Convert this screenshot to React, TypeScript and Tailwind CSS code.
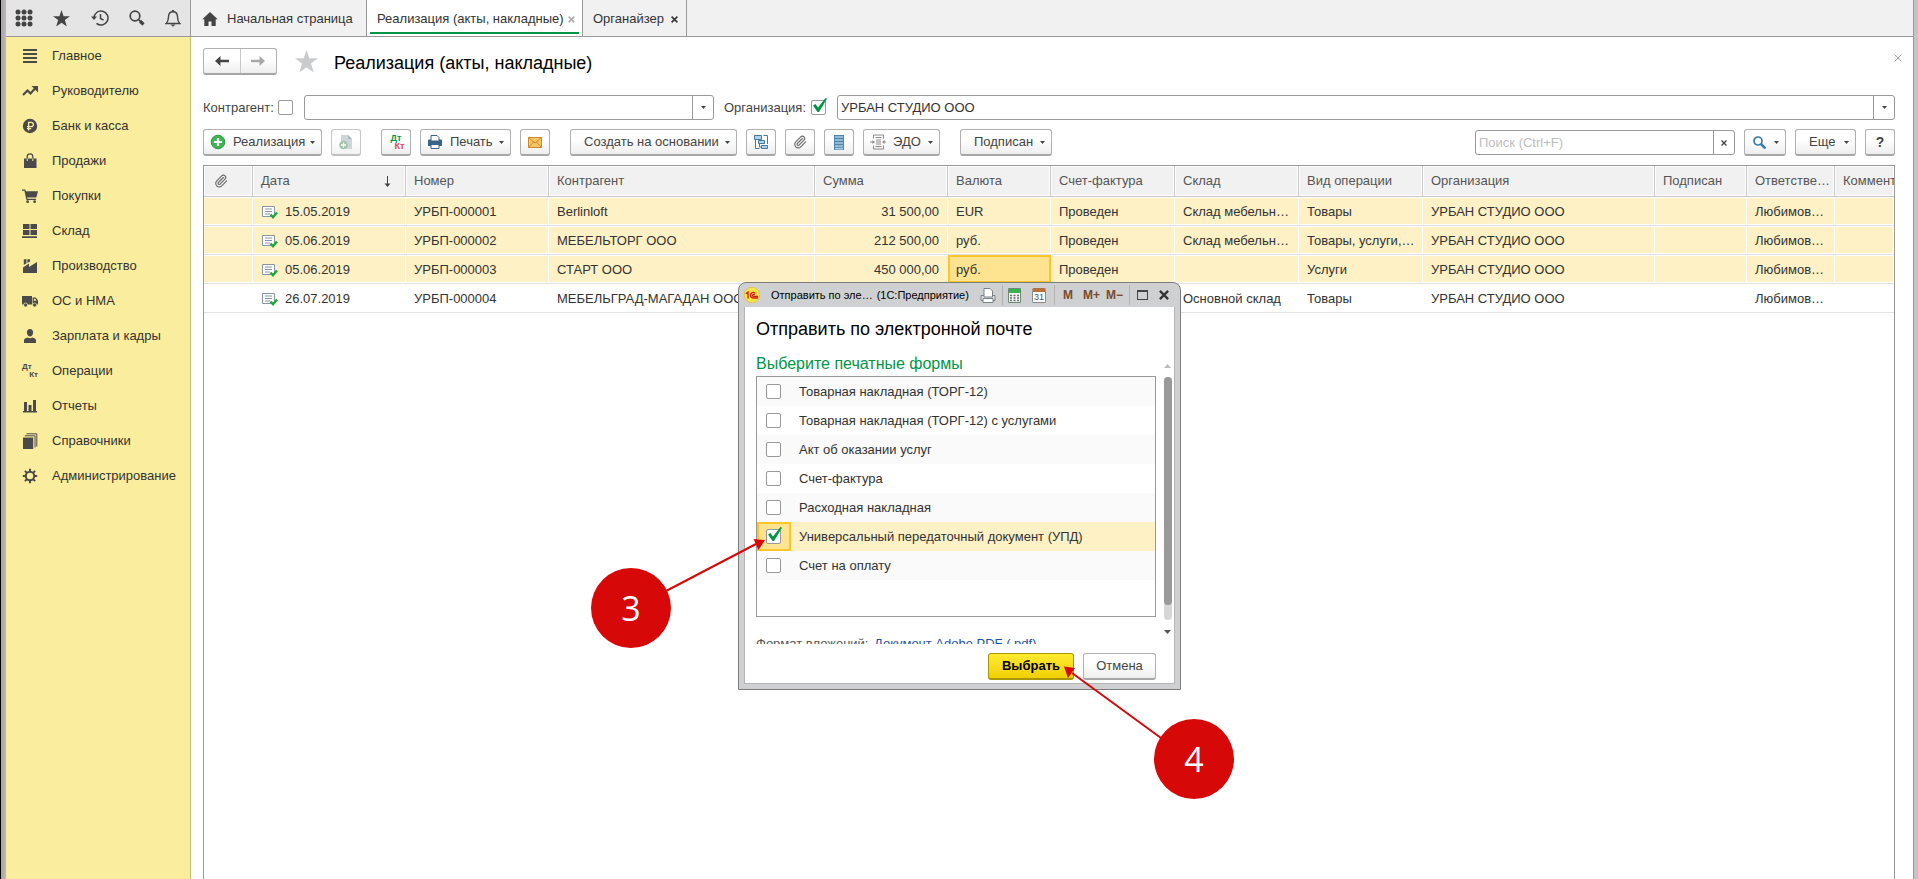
import { useState } from 'react'
import type { ReactNode } from 'react'
import clsx from 'clsx'
import { Paperclip } from 'lucide-react'

/**
 * App.tsx — список документов «Реализация» с окном отправки по почте
 */

const MENU = [
  { id: 'main', name: 'Главное' },
  { id: 'manager', name: 'Руководителю' },
  { id: 'bank', name: 'Банк и касса' },
  { id: 'sales', name: 'Продажи' },
  { id: 'purchases', name: 'Покупки' },
  { id: 'stock', name: 'Склад' },
  { id: 'production', name: 'Производство' },
  { id: 'assets', name: 'ОС и НМА' },
  { id: 'salary', name: 'Зарплата и кадры' },
  { id: 'operations', name: 'Операции' },
  { id: 'reports', name: 'Отчеты' },
  { id: 'catalogs', name: 'Справочники' },
  { id: 'admin', name: 'Администрирование' },
]

const COLUMNS = [
  { id: 'clip', name: '', width: 'w-[49px]' },
  { id: 'date', name: 'Дата', width: 'w-[153px]' },
  { id: 'number', name: 'Номер', width: 'w-[143px]' },
  { id: 'partner', name: 'Контрагент', width: 'w-[266px]' },
  { id: 'sum', name: 'Сумма', width: 'w-[133px]' },
  { id: 'currency', name: 'Валюта', width: 'w-[103px]' },
  { id: 'invoice', name: 'Счет-фактура', width: 'w-[124px]' },
  { id: 'store', name: 'Склад', width: 'w-[124px]' },
  { id: 'kind', name: 'Вид операции', width: 'w-[124px]' },
  { id: 'org', name: 'Организация', width: 'w-[232px]' },
  { id: 'signed', name: 'Подписан', width: 'w-[92px]' },
  { id: 'owner', name: 'Ответстве…', width: 'w-[88px]' },
  { id: 'comment', name: 'Коммент', width: '' },
]

const ROWS: Record<string, string>[] = [
  { date: '15.05.2019', number: 'УРБП-000001', partner: 'Berlinloft', sum: '31 500,00', currency: 'EUR', invoice: 'Проведен', store: 'Склад мебельн…', kind: 'Товары' },
  { date: '05.06.2019', number: 'УРБП-000002', partner: 'МЕБЕЛЬТОРГ ООО', sum: '212 500,00', currency: 'руб.', invoice: 'Проведен', store: 'Склад мебельн…', kind: 'Товары, услуги,…' },
  { date: '05.06.2019', number: 'УРБП-000003', partner: 'СТАРТ ООО', sum: '450 000,00', currency: 'руб.', invoice: 'Проведен', store: '', kind: 'Услуги' },
  { date: '26.07.2019', number: 'УРБП-000004', partner: 'МЕБЕЛЬГРАД-МАГАДАН ООО', sum: '', currency: '', invoice: '', store: 'Основной склад', kind: 'Товары' },
].map((r) => ({ ...r, org: 'УРБАН СТУДИО ООО', owner: 'Любимов…' }))

const FORMS = [
  'Товарная накладная (ТОРГ-12)',
  'Товарная накладная (ТОРГ-12) с услугами',
  'Акт об оказании услуг',
  'Счет-фактура',
  'Расходная накладная',
  'Универсальный передаточный документ (УПД)',
  'Счет на оплату',
]

const BTN =
  'flex h-[27px] items-center rounded-[3px] border border-[#b0b0b0] border-b-2 border-b-[#a6a6a6] bg-linear-to-b from-white from-40% to-[#eeeeee] text-[#444444]'

/* ---------- иконки ---------- */

function Svg({ w = 16, h = 16, className, children }: { w?: number; h?: number; className?: string; children: ReactNode }) {
  return (
    <svg width={w} height={h} viewBox={`0 0 ${w} ${h}`} className={clsx('shrink-0', className)} fill="currentColor" aria-hidden="true">
      {children}
    </svg>
  )
}

function MenuIcon({ id }: { id: string }) {
  switch (id) {
    case 'main':
      return <Svg><path d="M1 1h14v2H1zM1 5h14v2H1zM1 9h14v2H1zM1 13h14v2H1z" /></Svg>
    case 'manager':
      return (
        <Svg>
          <path d="M1 12 5.500 7.500 8.500 10.500 13 5.500" fill="none" stroke="currentColor" strokeWidth="2.200" />
          <path d="M9.500 3H16v6.500z" />
        </Svg>
      )
    case 'bank':
      return (
        <Svg>
          <circle cx="8" cy="8" r="7.200" />
          <path d="M6.600 12.500V4.300h2.600a2.100 2.100 0 0 1 0 4.300H5M5 10.600h4.200" fill="none" stroke="#fbed9e" strokeWidth="1.300" />
        </Svg>
      )
    case 'sales':
      return (
        <Svg>
          <path d="M2 5.500h12.500V15H2z" />
          <path d="M5.200 7V3.600a2.800 2.800 0 0 1 5.600 0V7" fill="none" stroke="currentColor" strokeWidth="1.300" />
          <path d="M5.200 5.500v2.500M10.800 5.500v2.500" stroke="#fbed9e" strokeWidth="1" />
        </Svg>
      )
    case 'purchases':
      return (
        <Svg>
          <path d="M0 1.500h3.300l.6 1.700H16l-1.700 6.300H5.200l.3 1.300H14V12H4.400L2.400 2.800H0z" />
          <circle cx="5.600" cy="13.700" r="1.400" />
          <circle cx="12.600" cy="13.700" r="1.400" />
        </Svg>
      )
    case 'stock':
      return <Svg><path d="M1 1h6.500v5H1zM8.500 1H15v5H8.500zM1 7h6.500v5H1zM8.500 7H15v5H8.500zM0 13.300h15v1.600H0z" /></Svg>
    case 'production':
      return <Svg><path d="M1 15V9.500L7 5.500V9l8-5V15zM1.800 1.200h2.700v4L1.800 7zM5.400 1.200H8v2.400L5.400 5z" /></Svg>
    case 'assets':
      return (
        <Svg>
          <path fillRule="evenodd" d="M0 3h10v8.500H0zM10.600 4.500h3.200L16 7.500v4h-5.400zM11.800 5.700v2h2.700l-1.300-2z" />
          <circle cx="3.600" cy="12" r="2" stroke="#fbed9e" strokeWidth=".7" />
          <circle cx="12.600" cy="12" r="2" stroke="#fbed9e" strokeWidth=".7" />
        </Svg>
      )
    case 'salary':
      return (
        <Svg>
          <path d="M8 1c2 0 3.100 1.400 3.100 3.400S9.700 8.600 8 8.600 4.900 6.400 4.900 4.400 6 1 8 1z" />
          <path d="M2 15v-2.500C2 10.700 3.700 10.200 5.600 9.600c1.500 1 3.300 1 4.800 0C12.300 10.200 14 10.700 14 12.500V15z" />
        </Svg>
      )
    case 'operations':
      return (
        <span className="flex h-4 w-4 flex-col text-[8px] leading-[8px] font-bold">
          <span>Дт</span>
          <span className="self-end">Кт</span>
        </span>
      )
    case 'reports':
      return <Svg><path d="M1 13h14v1.500H1zM2 4h3v10H2zM6.500 7h3v7h-3zM11 2h3v12h-3z" /></Svg>
    case 'catalogs':
      return (
        <Svg>
          <path d="M1 4.500h10.200V16H1z" />
          <path d="M2.800 2.800h10.200V14.500M4.500.8h10.300V13.500" fill="none" stroke="currentColor" strokeWidth="1" />
        </Svg>
      )
    default:
      return (
        <Svg>
          <circle cx="8" cy="8" r="4.200" fill="none" stroke="currentColor" strokeWidth="2" />
          <path d="M8 .8v3M8 12.200v3M.8 8h3M12.200 8h3M2.900 2.900l2 2M11.100 11.100l2 2M2.900 13.100l2-2M11.100 4.900l2-2" stroke="currentColor" strokeWidth="2" />
        </Svg>
      )
  }
}

const Star = ({ size, className }: { size: number; className?: string }) => (
  <svg width={size} height={size} viewBox="0 0 22 22" className={clsx('shrink-0', className)} fill="currentColor" aria-hidden="true">
    <path d="M11 0l2.700 8H22l-6.700 5 2.600 8.500L11 16.500 4.100 21.500 6.700 13 0 8h8.300z" />
  </svg>
)

const Caret = ({ className }: { className?: string }) => (
  <Svg w={5} h={3} className={className}><path d="M0 0h5L2.500 3z" /></Svg>
)

const Cross = ({ size = 7, className }: { size?: number; className?: string }) => (
  <svg width={size} height={size} viewBox="0 0 8 8" className={clsx('shrink-0', className)} aria-hidden="true">
    <path d="M.7.7l6.600 6.600M7.300.7L.7 7.300" stroke="currentColor" strokeWidth="1.800" />
  </svg>
)

const Clip = () => <Paperclip size={14} strokeWidth={2} className="shrink-0 text-[#6b6b6b]" aria-hidden="true" />

const DocIcon = () => (
  <Svg w={16} h={13}>
    <path d="M.5.5h12v10H.5z" fill="#ffffff" stroke="#8795a8" />
    <path d="M3 3h7M3 5.500h7M3 8h5" stroke="#8795a8" />
    <path d="M8.500 8.500l2.500 2.700 4-4.700" fill="none" stroke="#1fa83a" strokeWidth="2.400" />
  </Svg>
)

const DtKt = () => (
  <span className="flex w-[17px] flex-col text-[9px] leading-[8px] font-bold">
    <span className="text-[#009646]">Дт</span>
    <span className="self-end text-[#e0474c]">Кт</span>
  </span>
)

/* ---------- элементы формы ---------- */

function Check({ id, checked, onChange, label }: { id: string; checked: boolean; onChange: () => void; label?: string }) {
  return (
    <span className="relative flex h-[15px] w-[15px] shrink-0">
      <input
        id={id}
        type="checkbox"
        aria-label={label}
        checked={checked}
        onChange={onChange}
        className="h-[15px] w-[15px] appearance-none rounded-[2px] border border-[#999999] bg-white"
      />
      {checked && (
        <svg width="16" height="16" viewBox="0 0 16 16" className="pointer-events-none absolute -top-0.5 left-0.5" aria-hidden="true">
          <path d="M0 7.500 2.500 6 5 9.500 12.500 0 14 .8 6 14H4.500z" fill="#009646" />
        </svg>
      )}
    </span>
  )
}

function Combo({ id, value, className }: { id: string; value: string; className: string }) {
  return (
    <div className={clsx('flex h-[25px] rounded-[3px] border border-[#999999] bg-white', className)}>
      <input id={id} type="text" defaultValue={value} className="min-w-0 flex-1 px-[3px] text-[#333333] outline-none" />
      <button type="button" aria-label="Выбрать из списка" className="flex w-[21px] items-center justify-center border-l border-[#999999] text-[#444444]">
        <Caret />
      </button>
    </div>
  )
}

function Sidebar() {
  return (
    <nav className="flex-1 border-r border-[#cbbb72] bg-[#fbed9e] pt-px">
      {MENU.map((m) => (
        <a key={m.id} href={`#${m.id}`} className="flex h-[35px] items-center gap-[14px] pl-4 text-[#333333]">
          <span className="text-[#4a4a4a]"><MenuIcon id={m.id} /></span>
          {m.name}
        </a>
      ))}
    </nav>
  )
}

function ServiceBar() {
  return (
    <div className="flex h-[37px] items-center justify-between border-r border-b border-[#999999] bg-[#e5e5e5] px-[9px] text-[#444444]">
      <button type="button" aria-label="Меню функций">
        <Svg w={18} h={18}>
          {[3, 9, 15].map((y) => [3, 9, 15].map((x) => <circle key={`${x}-${y}`} cx={x} cy={y} r="2.500" />))}
        </Svg>
      </button>
      <button type="button" aria-label="Избранное"><Star size={17} /></button>
      <button type="button" aria-label="История">
        <Svg w={18} h={18}>
          <path d="M3 9.500V9a7 7 0 1 1 2.500 5.400" fill="none" stroke="currentColor" strokeWidth="1.500" />
          <path d="M0 7.500h6L3 11z" />
          <path d="M9.500 5v4.500l3 1.500" fill="none" stroke="currentColor" strokeWidth="1.500" />
        </Svg>
      </button>
      <button type="button" aria-label="Поиск">
        <Svg>
          <circle cx="6" cy="6" r="4.800" fill="none" stroke="currentColor" strokeWidth="1.700" />
          <path d="M9.500 9.500l2 2" stroke="currentColor" strokeWidth="1.500" />
          <path d="M11 11l3.500 3.500" stroke="currentColor" strokeWidth="3.200" />
        </Svg>
      </button>
      <button type="button" aria-label="Оповещения">
        <Svg w={16} h={17}>
          <path d="M1.200 13.500C3.500 11.500 3.300 9.500 3.500 6.500 3.700 3.500 5.500 1.800 8 1.800s4.300 1.700 4.500 4.700c.2 3 0 5 2.300 7z" fill="none" stroke="currentColor" strokeWidth="1.400" />
          <path d="M7 0h2v2H7zM5.500 14.500h5L8 16.800z" />
        </Svg>
      </button>
    </div>
  )
}

function Tabs() {
  return (
    <div className="flex h-[37px] border-b border-[#999999] bg-[#f1f1f1] text-[#333333]">
      <button type="button" className="flex w-[176px] items-center gap-[9px] border-r border-[#999999] pt-0.5 pl-[11px]">
        <Svg className="text-[#444444]"><path d="M8 1 .3 8.200h2V15h4.200v-4.500h3V15h4.200V8.200h2z" /></Svg>
        Начальная страница
      </button>
      <div className="w-[216px] border-r border-[#999999] bg-white px-[3px]">
        <div className="flex h-[34px] items-center justify-between border-b-2 border-[#009646] pt-1.5 pr-1 pl-[7px]">
          <button type="button">Реализация (акты, накладные)</button>
          <button type="button" aria-label="Закрыть вкладку" className="text-[#b0b0b0]"><Cross /></button>
        </div>
      </div>
      <div className="flex w-[104px] items-center justify-between border-r border-[#999999] pt-0.5 pr-2 pl-[10px]">
        <button type="button">Органайзер</button>
        <button type="button" aria-label="Закрыть вкладку" className="text-[#333333]"><Cross /></button>
      </div>
    </div>
  )
}

function Toolbar() {
  return (
    <div className="mt-[9px] flex items-center gap-[9px]">
      <button type="button" className={clsx(BTN, 'w-[119px] px-1.5')}>
        <Svg className="mr-[7px]">
          <circle cx="8" cy="8" r="6.800" fill="#3fb554" stroke="#2b9a41" />
          <path d="M8 4v8M4 8h8" stroke="#ffffff" strokeWidth="2.200" />
        </Svg>
        Реализация
        <Caret className="ml-auto" />
      </button>
      <button type="button" aria-label="Скопировать" disabled className={clsx(BTN, 'mr-[11px] w-[30px] justify-center opacity-70')}>
        <Svg>
          <path d="M3 1h7l4 4v10H3z" fill="#b9c2cb" />
          <path d="M10 1l4 4h-4z" fill="#8e9aa6" />
          <circle cx="5.500" cy="11" r="4.300" fill="#7fa98a" />
          <path d="M5.500 8.500v5M3 11h5" stroke="#ffffff" strokeWidth="1.300" />
        </Svg>
      </button>
      <button type="button" aria-label="Дт/Кт" className={clsx(BTN, 'w-[30px] justify-center')}><DtKt /></button>
      <button type="button" className={clsx(BTN, 'w-[91px] px-1.5')}>
        <Svg className="mr-[7px]">
          <path d="M2 5.500h12a1 1 0 0 1 1 1V12H1V6.500a1 1 0 0 1 1-1z" fill="#3c6286" />
          <path d="M4 1.500h6L12 3.500V7H4z" fill="#ffffff" stroke="#3c6286" />
          <path d="M4 10.500h8v4H4z" fill="#ffffff" stroke="#3c6286" />
        </Svg>
        Печать
        <Caret className="ml-auto" />
      </button>
      <button type="button" aria-label="Отправить по электронной почте" className={clsx(BTN, 'mr-[11px] w-[30px] justify-center')}>
        <Svg w={14} h={11}>
          <path d="M.5.5h13v10H.5z" fill="#f8c566" stroke="#c98a2b" />
          <path d="M.5.5 7 6l6.500-5.500M.5 10.500l5-5.500M13.500 10.500l-5-5.500" fill="none" stroke="#c98a2b" />
        </Svg>
      </button>
      <button type="button" className={clsx(BTN, 'w-[167px] pr-1.5 pl-[13px]')}>
        Создать на основании
        <Caret className="ml-auto" />
      </button>
      <button type="button" aria-label="Структура подчиненности" className={clsx(BTN, 'w-[30px] justify-center')}>
        <Svg>
          <path d="M1.500 1.500h7v4h-7zM5.500 6.500h6v3h-6zM8.500 11.500h6v3h-6z" fill="#b5d3e7" stroke="#45799f" />
          <path d="M2.500 6v8.500h4M10.500 1.500h4V10M6.500 9.500V13h2" fill="none" stroke="#45799f" />
        </Svg>
      </button>
      <button type="button" aria-label="Присоединенные файлы" className={clsx(BTN, 'w-[30px] justify-center')}><Clip /></button>
      <button type="button" aria-label="Реестр" className={clsx(BTN, 'w-[30px] justify-center')}>
        <Svg w={10} h={15}>
          <path d="M0 0h10v15H0z" fill="#4f86ad" />
          <path d="M1 2h8M1 5h8M1 8h8M1 11h8M1 13.700h8" stroke="#a9cce3" strokeWidth="1.700" />
        </Svg>
      </button>
      <button type="button" className={clsx(BTN, 'mr-[11px] w-[77px] px-1.5')}>
        <Svg className="mr-[7px]">
          <path d="M3.500 4.500V1h10v3.500M3.500 11.500V15h10v-3.500" fill="none" stroke="#8a8a8a" />
          <path d="M5.500 3.500h6M6 6h5M6 8h5M6 10h5M5.500 12.500h6" stroke="#8a8a8a" />
          <path d="M0 7.500h2.500V6L5 8 2.500 10V8.500H0zM16 7.500h-1.500V6L12 8l2.500 2V8.500H16z" fill="#8a8a8a" />
        </Svg>
        ЭДО
        <Caret className="ml-auto" />
      </button>
      <button type="button" className={clsx(BTN, 'w-[92px] pr-1.5 pl-[13px]')}>
        Подписан
        <Caret className="ml-auto" />
      </button>

      <div className="ml-auto flex h-[25px] w-[260px] rounded-[3px] border border-[#999999] bg-white">
        <input type="text" aria-label="Поиск" placeholder="Поиск (Ctrl+F)" className="min-w-0 flex-1 px-[3px] outline-none placeholder:text-[#bdbdbd]" />
        <button type="button" aria-label="Очистить" className="flex w-[21px] items-center justify-center border-l border-[#999999] text-[#444444]">
          <Cross size={6} />
        </button>
      </div>
      <button type="button" aria-label="Найти" className={clsx(BTN, 'w-[42px] pr-1.5 pl-2')}>
        <Svg w={13} h={13}>
          <circle cx="5" cy="5" r="4" fill="#ffffff" stroke="#3a7cb0" strokeWidth="1.700" />
          <path d="M8 8l4.500 4.500" stroke="#3a7cb0" strokeWidth="2.600" />
        </Svg>
        <Caret className="ml-auto" />
      </button>
      <button type="button" className={clsx(BTN, 'w-[61px] pr-1.5 pl-[13px]')}>
        Еще
        <Caret className="ml-auto" />
      </button>
      <button type="button" className={clsx(BTN, 'w-[30px] justify-center text-sm font-bold')}>?</button>
    </div>
  )
}

function DocumentsTable() {
  return (
    <div className="mt-[9px] flex-1 overflow-hidden border border-b-0 border-[#999999]">
      <table className="w-full table-fixed border-separate border-spacing-0 text-left">
        <colgroup>
          {COLUMNS.map((c) => <col key={c.id} className={c.width} />)}
        </colgroup>
        <thead>
          <tr>
            {COLUMNS.map((c) => (
              <th key={c.id} className="border-r border-b border-[#c8c8c8] p-0 font-normal text-[#555555] last:border-r-0">
                <div className="flex h-[30px] items-center justify-between border border-white bg-[#f1f1f1] px-[7px] whitespace-nowrap">
                  {c.id === 'clip' ? <span className="ml-0.5"><Clip /></span> : c.name}
                  {c.id === 'date' && (
                    <Svg w={7} h={11} className="mr-1.5 text-[#444444]"><path d="M3 0h1v7.500h2.500L3.500 11 .5 7.500H3z" /></Svg>
                  )}
                </div>
              </th>
            ))}
          </tr>
        </thead>
        <tbody>
          {ROWS.map((row, i) => (
            <tr key={row.number}>
              {COLUMNS.map((c) => (
                <td key={c.id} className="border-b border-[#e2e2e2] p-0">
                  <div
                    className={clsx(
                      'flex h-7 items-center overflow-hidden border-y border-r border-white px-2 pt-0.5 whitespace-nowrap text-[#333333]',
                      c.id === 'sum' && 'justify-end',
                      i < 3 && 'bg-[#fdf1c5]',
                      i === 2 && c.id === 'currency' && 'bg-[#fee490] outline-2 -outline-offset-2 outline-[#fbc728]',
                    )}
                  >
                    {c.id === 'date' && <span className="mr-[7px] ml-px"><DocIcon /></span>}
                    {row[c.id]}
                  </div>
                </td>
              ))}
            </tr>
          ))}
        </tbody>
      </table>
    </div>
  )
}

function SendDialog() {
  const [picked, setPicked] = useState<number[]>([5])

  const toggle = (i: number) => {
    setPicked((p) => (p.includes(i) ? p.filter((x) => x !== i) : [...p, i]))
  }

  return (
    <section
      role="dialog"
      aria-labelledby="send-title"
      className="absolute top-[282px] left-[737px] w-[443px] rounded-t-lg border border-[#7d7d7d] bg-[#cfd0d1] px-[5px] pb-[5px]"
    >
      {/* Заголовок окна */}
      <div className="flex h-6 items-center text-[11px] text-black">
        <Svg className="mr-[11px]">
          <circle cx="8" cy="8" r="7.700" fill="#fbe34b" stroke="#e3b71c" strokeWidth=".6" />
          <path d="M1.800 6.800 4 5v6.500M11 6.300C9.500 4.500 6.500 5.500 6.500 8s2 3 3.500 3h4M10.800 7.800C9.500 7 8.300 7.500 8.500 8.600c.1.600.7.700 1.500.7h4" fill="none" stroke="#d8151b" strokeWidth="1.300" />
        </Svg>
        <span className="mr-1 whitespace-nowrap">Отправить по эле…</span>
        <span className="whitespace-nowrap">(1С:Предприятие)</span>
        <div className="ml-auto flex shrink-0 items-center text-[#7a4a2a]">
          <button type="button" aria-label="Печать" className="mr-[6px]">
            <Svg w={16} h={15}>
              <path d="M1 7.500h14v5H1z" fill="#dfe3e6" stroke="#77818a" />
              <path d="M4 .5h6L12.500 3v6H4z" fill="#ffffff" stroke="#77818a" />
              <path d="M3 10.500h10v4H3z" fill="#ffffff" stroke="#77818a" />
            </Svg>
          </button>
          <span className="mr-[5px] h-5 w-px bg-[#b4b4b4]" />
          <button type="button" aria-label="Калькулятор" className="mr-[11px]">
            <Svg w={13} h={15}>
              <path d="M.5.5h12v14H.5z" fill="#f4f4f4" stroke="#6f8a74" />
              <path d="M1 1h11v4H1z" fill="#35b34c" />
              <path d="M2 7.500h2M5.500 7.500h2M9 7.500h2M2 10h2M5.500 10h2M9 10h2M2 12.500h2M5.500 12.500h2M9 12.500h2" stroke="#6b6b6b" strokeWidth="1.300" />
            </Svg>
          </button>
          <button type="button" aria-label="Календарь" className="mr-2">
            <span className="flex h-[15px] w-[14px] flex-col rounded-[2px] border border-[#8a8a8a] border-t-4 border-t-[#b8703c] bg-white text-center text-[9px] leading-[10px] text-[#3d5a78]">
              31
            </span>
          </button>
          <span className="mr-2 h-5 w-px bg-[#b4b4b4]" />
          <button type="button" className="w-5 text-left text-xs font-bold">M</button>
          <button type="button" className="w-[23px] text-left text-xs font-bold">M+</button>
          <button type="button" className="w-[23px] text-left text-xs font-bold">M−</button>
          <span className="mr-[7px] h-5 w-px bg-[#b4b4b4]" />
          <button type="button" aria-label="Развернуть" className="mr-[11px] h-[10px] w-[11px] border border-t-2 border-[#444444]" />
          <button type="button" aria-label="Закрыть" className="mr-[6px] text-[#333333]"><Cross size={10} /></button>
        </div>
      </div>

      <div className="flex border border-t-0 border-[#b5b5b5] bg-white">
        <div className="min-w-0 flex-1 pl-[11px]">
          <h2 id="send-title" className="mt-3 text-[18px] leading-5 text-black">Отправить по электронной почте</h2>
          <h3 className="mt-[15px] text-base leading-5 text-[#009646]">Выберите печатные формы</h3>
          <ul className="mt-0.5 h-[241px] border border-[#999999] bg-white">
            {FORMS.map((name, i) => (
              <li
                key={name}
                className={clsx('flex h-[29px] items-center', i === 5 ? 'bg-[#fdf1c5]' : i % 2 === 0 ? 'bg-[#fafafa]' : 'bg-white')}
              >
                <span
                  className={clsx(
                    'flex h-[29px] w-[34px] items-center border-2 pl-[7px]',
                    i === 5 ? 'border-[#fbc728] bg-[#fee490]' : 'border-transparent',
                  )}
                >
                  <Check id={`form-${i}`} checked={picked.includes(i)} onChange={() => toggle(i)} />
                </span>
                <label htmlFor={`form-${i}`} className="pl-2 text-[#333333]">{name}</label>
              </li>
            ))}
          </ul>
          <p className="mt-[19px] h-2 overflow-hidden leading-4 text-[#555555]">
            Формат вложений: <a href="#format" className="ml-0.5 text-[#1d52a6]">Документ Adobe PDF (.pdf)</a>
          </p>
          <div className="mt-[9px] mb-[3px] flex justify-end gap-[9px]">
            <button
              type="button"
              className="h-[27px] w-[86px] rounded-[3px] border border-b-2 border-[#a89600] bg-linear-to-b from-[#ffea2e] to-[#f0d000] font-bold text-black"
            >
              Выбрать
            </button>
            <button type="button" className={clsx(BTN, 'w-[73px] justify-center')}>Отмена</button>
          </div>
        </div>
        {/* Полоса прокрутки */}
        <div className="ml-2 flex w-[10px] flex-col items-start pt-[57px] pr-0.5">
          <Svg w={7} h={4} className="mb-[9px] text-[#bdbdbd]"><path d="M0 4h7L3.500 0z" /></Svg>
          <span className="h-[243px] w-[8px] rounded-full bg-[#d6d6d6]">
            <span className="block h-[228px] w-[8px] rounded-full bg-[#999999]" />
          </span>
          <Svg w={7} h={4} className="mt-[10px] text-[#555555]"><path d="M0 0h7L3.500 4z" /></Svg>
        </div>
      </div>
    </section>
  )
}

/* Номера шагов со стрелками */
function Steps() {
  return (
    <div className="font-['Open_Sans',sans-serif] text-[34px] text-white">
      <svg width="660" height="280" viewBox="0 0 660 280" className="pointer-events-none absolute top-[530px] left-[589px]" aria-hidden="true">
        <g stroke="#d70808" strokeWidth="2">
          <path d="M76 61 166 14" />
          <path d="M571 208 482 143" />
        </g>
        <path d="M175 10 163.500 9 168.500 20z" fill="#d70808" />
        <path d="M474 136.500 485 138 478 148z" fill="#d70808" />
      </svg>
      <div className="absolute top-[568px] left-[590px] flex h-20 w-20 items-center justify-center rounded-full bg-[#d70808]">3</div>
      <div className="absolute top-[719px] left-[1153px] flex h-20 w-20 items-center justify-center rounded-full bg-[#d70808]">4</div>
    </div>
  )
}

export default function App() {
  const [byPartner, setByPartner] = useState(false)
  const [byOrg, setByOrg] = useState(true)

  return (
    <div className="relative flex min-h-screen overflow-hidden border-l border-black bg-white font-['Liberation_Sans',Arial,sans-serif] text-[13px] leading-4">
      <div className="w-[5px] shrink-0 bg-linear-to-r from-[#a9a5a7] to-[#bdb9bb]" />
      <div className="flex w-[185px] shrink-0 flex-col">
        <ServiceBar />
        <Sidebar />
      </div>

      <div className="flex min-w-0 flex-1 flex-col">
        <Tabs />
        <main className="flex flex-1 flex-col pr-[18px] pl-3">
          <div className="mt-3 flex h-[25px] items-center">
            <div className={clsx(BTN, 'w-[74px]')}>
              <button type="button" aria-label="Назад" className="flex h-full flex-1 items-center justify-center border-r border-[#c8c8c8]">
                <Svg w={14} h={10}><path d="M0 5 5.500 0v3.800H14v2.400H5.500V10z" /></Svg>
              </button>
              <button type="button" aria-label="Вперед" className="flex h-full flex-1 items-center justify-center text-[#a8a8a8]">
                <Svg w={14} h={10}><path d="M14 5 8.500 0v3.800H0v2.400h8.500V10z" /></Svg>
              </button>
            </div>
            <button type="button" aria-label="В избранное" className="ml-[18px] text-[#c9cbcd]"><Star size={23} /></button>
            <h1 className="ml-4 pt-0.5 text-[18px] text-black">Реализация (акты, накладные)</h1>
            <button type="button" aria-label="Закрыть" className="mr-[-7px] mb-2 ml-auto text-[#a0a0a0]">
              <svg width="8" height="8" viewBox="0 0 8 8" aria-hidden="true"><path d="M.5.5l7 7M7.500.5l-7 7" stroke="currentColor" /></svg>
            </button>
          </div>

          <div className="mt-[21px] flex items-center text-[#444444]">
            <label htmlFor="partner" className="w-[75px] whitespace-nowrap">Контрагент:</label>
            <Check id="use-partner" label="Отбор по контрагенту" checked={byPartner} onChange={() => setByPartner((v) => !v)} />
            <Combo id="partner" value="" className="mr-[10px] ml-[11px] w-[410px]" />
            <label htmlFor="org" className="w-[87px] whitespace-nowrap">Организация:</label>
            <Check id="use-org" label="Отбор по организации" checked={byOrg} onChange={() => setByOrg((v) => !v)} />
            <Combo id="org" value="УРБАН СТУДИО ООО" className="ml-[11px] flex-1" />
          </div>

          <Toolbar />
          <DocumentsTable />
        </main>
      </div>
      <div className="w-[5px] shrink-0 border-l border-[#999999] bg-[#c2c4c6]" />

      <SendDialog />
      <Steps />
    </div>
  )
}
